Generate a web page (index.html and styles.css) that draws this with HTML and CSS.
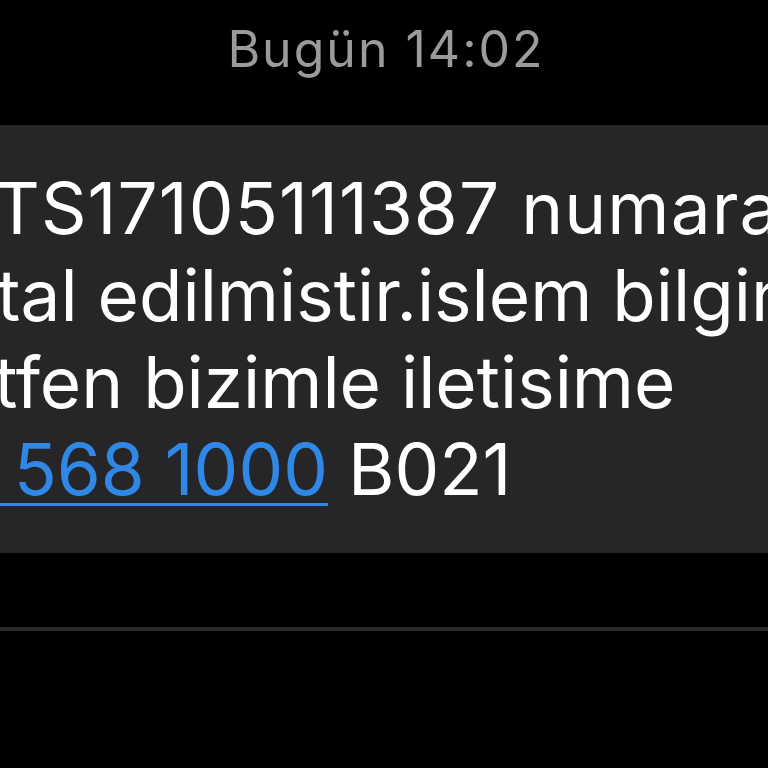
FILE: index.html
```html
<!DOCTYPE html>
<html lang="tr">
<head>
<meta charset="utf-8">
<link rel="stylesheet" href="styles.css">
</head>
<body>
<div class="screen">
  <div class="stamp">Bugün 14:02</div>
  <div class="bubble">
    <div class="line l1">TS17105111387 numaralı</div>
    <div class="line l2">tal edilmistir.islem bilginiz</div>
    <div class="line l3"><span class="cut3">Lü</span>tfen bizimle iletisime</div>
    <div class="line l4"><a class="link" href="#"><span class="cut4">0850</span> 568 1000</a> B021</div>
  </div>
  <div class="divider"></div>
</div>
</body>
</html>
```
FILE: styles.css
```css
html, body {
  margin: 0;
  padding: 0;
  background: #000;
}
.screen {
  width: 768px;
  height: 768px;
  overflow: hidden;
  background: #000;
  font-family: Inter, "Noto Sans", sans-serif;
  display: flex;
  flex-direction: column;
}
.stamp {
  color: #9b9b9b;
  font-size: 50px;
  letter-spacing: 2px;
  line-height: 58px;
  text-align: center;
  padding-top: 20px;
  padding-left: 4px;
  height: 106px;
  box-sizing: border-box;
}
.bubble {
  margin-top: 19px;
  height: 428px;
  background: #262628;
  box-sizing: border-box;
  padding-top: 40px;
  overflow: hidden;
  color: #fff;
  font-size: 71px;
}
.line {
  white-space: nowrap;
  line-height: 87px;
  height: 87px;
}
.l1 { margin-left: -6px; letter-spacing: 1.1px; }
.l2 { margin-left: -3px; }
.l3 .cut3 { margin-left: -88px; }
.link {
  color: #2f87e6;
  text-decoration: underline;
  text-decoration-thickness: 3px;
  text-underline-offset: 8px;
}
.cut4 { margin-left: -183px; }
.divider {
  margin-top: 74px;
  height: 4px;
  background: #2a2a2a;
}
```
